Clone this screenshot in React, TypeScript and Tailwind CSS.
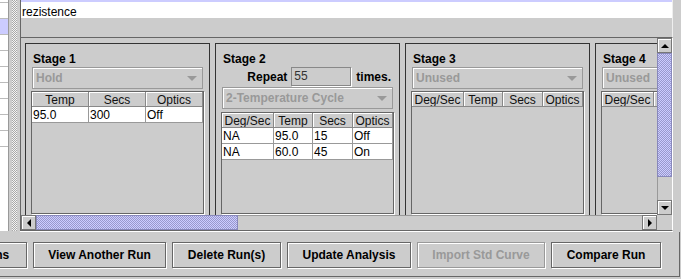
import React from 'react';

type Col = { label: string; w: string };

const wideCols: Col[] = [
  { label: 'Deg/Sec', w: 'w-[52px]' },
  { label: 'Temp', w: 'w-[39px]' },
  { label: 'Secs', w: 'w-[40px]' },
  { label: 'Optics', w: 'w-[40px]' },
];

const holdCols: Col[] = [
  { label: 'Temp', w: 'w-[57px]' },
  { label: 'Secs', w: 'w-[57px]' },
  { label: 'Optics', w: 'w-[57px]' },
];

const bumps =
  'bg-[#ccccff] bg-[image:conic-gradient(#9999cc_25%,#ccccff_0_50%,#9999cc_0_75%,#ccccff_0)] bg-[length:2px_2px]';

const Tri = ({ dir, color = '#000' }: { dir: 'up' | 'down' | 'left' | 'right'; color?: string }) => {
  const pts = {
    up: '0,4 4,0 8,4',
    down: '0,0 8,0 4,4',
    left: '4,0 4,8 0,4',
    right: '0,0 0,8 4,4',
  }[dir];
  const vert = dir === 'up' || dir === 'down';
  return (
    <svg width={vert ? 8 : 4} height={vert ? 4 : 8} viewBox={vert ? '0 0 8 4' : '0 0 4 8'}>
      <polygon points={pts} fill={color} />
    </svg>
  );
};

const ArrowBtn = ({ dir }: { dir: 'up' | 'down' | 'left' | 'right' }) => (
  <div className="w-[15px] h-[15px] shrink-0 bg-[#cccccc] border border-[#777] shadow-[inset_1px_1px_0_#fff] flex items-center justify-center">
    <Tri dir={dir} />
  </div>
);

const Combo = ({ text }: { text: string }) => (
  <div className="mx-[1px] h-[22px] shrink-0 border border-[#999] shadow-[inset_1px_1px_0_#fff] flex items-center justify-between pl-[3px] pr-[5px] font-bold text-[#999] leading-[20px] whitespace-nowrap overflow-hidden">
    <span>{text}</span>
    <svg width="10" height="5" viewBox="0 0 10 5">
      <polygon points="0,0 10,0 5,5" fill="#999" />
    </svg>
  </div>
);

const Table = ({ cols, rows, mt }: { cols: Col[]; rows: string[][]; mt: string }) => (
  <div className={`${mt} flex-1 border border-[#666] shadow-[1px_1px_0_#fff] flex flex-col overflow-hidden`}>
    <div className="flex h-[15px] shrink-0">
      {cols.map((c) => (
        <div
          key={c.label}
          className={`${c.w} shrink-0 h-[15px] border-r border-b border-[#888] shadow-[inset_1px_1px_0_#fff] text-center leading-[15px] pt-[1px] text-[#111] whitespace-nowrap overflow-hidden`}
        >
          {c.label}
        </div>
      ))}
    </div>
    {rows.map((r, ri) => (
      <div key={ri} className="flex h-[16px] shrink-0">
        {r.map((v, i) => (
          <div
            key={i}
            className={`${cols[i].w} shrink-0 h-[16px] bg-white border-r border-b border-[#999] pl-[1px] leading-[16px]`}
          >
            {v}
          </div>
        ))}
      </div>
    ))}
  </div>
);

const StageTitle = ({ n }: { n: number }) => (
  <div className="h-[16px] shrink-0 pl-[2px] font-bold leading-[16px] whitespace-nowrap">Stage {n}</div>
);

const Button = ({ label, w, disabled }: { label: string; w: string; disabled?: boolean }) => (
  <div
    className={`${w} h-[26px] shrink-0 border flex items-center justify-center font-bold whitespace-nowrap shadow-[inset_1px_1px_0_#fff,1px_1px_0_#fff] ${
      disabled ? 'border-[#999] text-[#999]' : 'border-[#666] text-black'
    }`}
  >
    {label}
  </div>
);

export default function App() {
  return (
    <div className="w-[681px] h-[279px] overflow-hidden bg-[#cccccc] text-[12px] text-black font-['Liberation_Sans',Arial,sans-serif] flex flex-col">
      <div className="flex h-[232px] shrink-0">
        {/* run list */}
        <div className="w-[9px] h-[231px] shrink-0 bg-white border-r border-[#999] flex flex-col">
          <div className="h-[3px] border-b border-[#bbb]" />
          <div className="h-[16px] border-b border-[#bbb]" />
          <div className="h-[16px] border-b border-[#bbb] bg-[#ccccff]" />
          <div className="h-[16px] border-b border-[#bbb]" />
          <div className="h-[16px] border-b border-[#bbb]" />
          <div className="h-[16px] border-b border-[#bbb]" />
          <div className="h-[16px] border-b border-[#bbb]" />
          <div className="h-[16px] border-b border-[#bbb]" />
          <div className="h-[16px] border-b border-[#bbb]" />
          <div className="h-[16px] border-b border-[#bbb]" />
        </div>

        {/* split divider */}
        <div className="w-[11px] h-[231px] shrink-0 pl-[3px]">
          <div className="w-[5px] h-full bg-[#cccccc] bg-[image:conic-gradient(#f4f4f4_25%,#a8a8a8_0_50%,#f4f4f4_0_75%,#a8a8a8_0)] bg-[length:2px_2px]" />
        </div>

        <div className="w-[653px] shrink-0 flex flex-col">
          <div className="h-[37px] shrink-0 border-l border-[#666] border-r border-r-[#eeeeee] flex flex-col">
            <div className="h-[2px] bg-[#ccccff]" />
            <div className="h-[16px] bg-white overflow-hidden pl-[1px] leading-[20px]">rezistence</div>
          </div>

          {/* stage scroll pane */}
          <div className="h-[194px] shrink-0 border border-[#666] border-r-white shadow-[0_1px_0_#fff] flex flex-col">
            <div className="h-[177px] flex">
              <div className="w-[636px] h-full overflow-hidden flex gap-[5px] pl-[4px] pt-[5px]">
                <div className="w-[185px] h-[180px] shrink-0 border border-[#333] flex flex-col px-[5px] pt-[7px] pb-[8px]">
                  <StageTitle n={1} />
                  <Combo text="Hold" />
                  <Table cols={holdCols} rows={[['95.0', '300', 'Off']]} mt="mt-[2px]" />
                </div>

                <div className="w-[185px] h-[180px] shrink-0 border border-[#333] flex flex-col px-[5px] pt-[7px] pb-[8px]">
                  <StageTitle n={2} />
                  <div className="h-[19px] shrink-0 flex justify-end items-center pr-[3px] font-bold">
                    <span className="mr-[4px]">Repeat</span>
                    <div className="w-[60px] h-[19px] border border-[#888] shadow-[1px_1px_0_#fff] pl-[2px] font-normal text-[#333] leading-[17px]">
                      55
                    </div>
                    <span className="ml-[5px]">times.</span>
                  </div>
                  <div className="mt-[1px]">
                    <Combo text="2-Temperature Cycle" />
                  </div>
                  <Table
                    cols={wideCols}
                    rows={[
                      ['NA', '95.0', '15', 'Off'],
                      ['NA', '60.0', '45', 'On'],
                    ]}
                    mt="mt-[3px]"
                  />
                </div>

                <div className="w-[185px] h-[180px] shrink-0 border border-[#333] flex flex-col px-[5px] pt-[7px] pb-[8px]">
                  <StageTitle n={3} />
                  <Combo text="Unused" />
                  <Table cols={wideCols} rows={[]} mt="mt-[2px]" />
                </div>

                <div className="w-[185px] h-[180px] shrink-0 border border-[#333] flex flex-col px-[5px] pt-[7px] pb-[8px]">
                  <StageTitle n={4} />
                  <Combo text="Unused" />
                  <Table cols={wideCols} rows={[]} mt="mt-[2px]" />
                </div>
              </div>

              {/* vertical scrollbar */}
              <div className="w-[15px] h-full shrink-0 flex flex-col bg-[#cccccc]">
                <ArrowBtn dir="up" />
                <div className={`h-[124px] shrink-0 border border-[#8888bb] ${bumps}`} />
                <div className="flex-1 border-l border-[#999]" />
                <ArrowBtn dir="down" />
              </div>
            </div>

            {/* horizontal scrollbar */}
            <div className="h-[15px] flex">
              <ArrowBtn dir="left" />
              <div className={`w-[202px] h-[15px] shrink-0 border border-[#8888bb] ${bumps}`} />
              <div className="w-[404px] h-[15px] shrink-0 border-t border-[#999]" />
              <ArrowBtn dir="right" />
              <div className="w-[15px] h-[15px] shrink-0" />
            </div>
          </div>
        </div>
      </div>

      {/* button bar */}
      <div className="w-[680px] h-[45px] shrink-0 border-r border-b border-[#666] overflow-hidden flex gap-[6px] pt-[10px]">
        <div className="ml-[-54px] flex gap-[6px]">
          <Button label="Options" w="w-[81px]" />
          <Button label="View Another Run" w="w-[133px]" />
          <Button label="Delete Run(s)" w="w-[109px]" />
          <Button label="Update Analysis" w="w-[124px]" />
          <Button label="Import Std Curve" w="w-[128px]" disabled />
          <Button label="Compare Run" w="w-[110px]" />
        </div>
      </div>
    </div>
  );
}
